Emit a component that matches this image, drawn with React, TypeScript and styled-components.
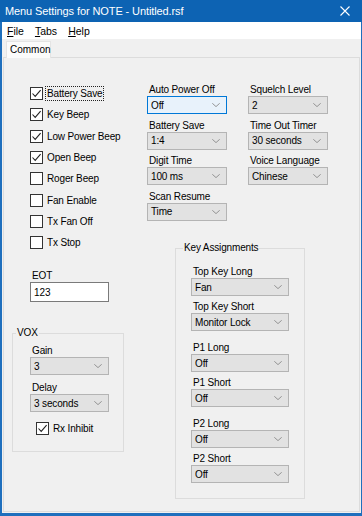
import styled, { createGlobalStyle } from "styled-components";

const GlobalStyle = createGlobalStyle`
  html, body {
    margin: 0;
    padding: 0;
    background: #ffffff;
  }
  body {
    font-family: "Liberation Sans", Arial, sans-serif;
    font-size: 10px;
    color: #000;
  }
`;

const Window = styled.div`
  width: 362px;
  height: 516px;
  box-sizing: border-box;
  border-left: 2px solid #1f6fbd;
  border-right: 1px solid #1f6fbd;
  border-bottom: 3px solid #1f6fbd;
  background: #f0f0f0;
  display: flex;
  flex-direction: column;
`;

const TitleBar = styled.div`
  height: 22px;
  margin: 0 -1px 0 -2px;
  background: #0d63b3;
  color: #fff;
  display: flex;
  align-items: center;
  justify-content: space-between;
  padding: 0 12px 0 5px;
  font-size: 11px;
  letter-spacing: -0.1px;
`;

const CloseIcon = styled.svg`
  width: 10px;
  height: 10px;
`;

const MenuBar = styled.div`
  height: 17px;
  background: #fff;
  display: flex;
  align-items: center;
  padding-left: 5px;
  gap: 11px;
  font-size: 10.5px;
`;

const MenuItem = styled.span`
  & > u {
    text-decoration: underline;
  }
`;

const TabStrip = styled.div`
  height: 19px;
  display: flex;
  align-items: flex-end;
  padding-left: 4px;
`;

const Tab = styled.div`
  height: 17px;
  width: 45px;
  box-sizing: border-box;
  background: #fbfbfb;
  border: 1px solid #e4e4e4;
  border-bottom: none;
  padding: 2px 0 0 3px;
  font-size: 10px;
  position: relative;
  z-index: 1;
`;

const Panel = styled.div`
  flex: 1;
  margin: -1px 1px 1px 1px;
  border: 1px solid #dcdcdc;
  display: flex;
  padding-top: 25px;
`;

const LeftCol = styled.div`
  width: 143px;
  display: flex;
  flex-direction: column;
`;

const CheckList = styled.div`
  padding-left: 26px;
  display: flex;
  flex-direction: column;
`;

const CheckRow = styled.div<{ $h?: number }>`
  height: ${(p) => p.$h ?? 21.3}px;
  display: flex;
  align-items: center;
  gap: 2px;
`;

const Box = styled.div`
  width: 13px;
  height: 13px;
  box-sizing: border-box;
  border: 1px solid #333;
  background: #fff;
  display: flex;
  align-items: center;
  justify-content: center;
`;

const CheckLabel = styled.span<{ $focus?: boolean }>`
  padding: 1px 1px;
  border: 1px dotted ${(p) => (p.$focus ? "#222" : "transparent")};
  letter-spacing: -0.15px;
`;

const FieldLabel = styled.div`
  line-height: 12px;
  height: 12px;
  padding-left: 2px;
  letter-spacing: -0.15px;
`;

const Field = styled.div<{ $gap?: number }>`
  display: flex;
  flex-direction: column;
  margin-bottom: ${(p) => p.$gap ?? 5.5}px;
`;

const TextBox = styled.div`
  width: 79px;
  height: 20px;
  box-sizing: border-box;
  border: 1px solid #7a7a7a;
  background: #fff;
  display: flex;
  align-items: center;
  padding-left: 3px;
`;

const Select = styled.div<{ $w: number; $focus?: boolean }>`
  width: ${(p) => p.$w}px;
  height: 18px;
  box-sizing: border-box;
  border: 1px solid ${(p) => (p.$focus ? "#0078d7" : "#b4b4b4")};
  background: ${(p) => (p.$focus ? "#e8f2fb" : "#e2e2e2")};
  display: flex;
  align-items: center;
  justify-content: space-between;
  padding: 0 6px 0 3px;
  letter-spacing: -0.15px;
`;

const Chevron = styled.svg`
  width: 8px;
  height: 4px;
`;

const EotBlock = styled.div`
  padding-left: 26px;
  margin-top: 17px;
`;

const Group = styled.fieldset<{ $w: number; $h: number }>`
  margin: 0;
  width: ${(p) => p.$w}px;
  height: ${(p) => p.$h}px;
  box-sizing: border-box;
  border: 1px solid #dcdcdc;
  padding: 0;
  display: flex;
  flex-direction: column;
`;

const Legend = styled.legend<{ $shift: number }>`
  margin-left: ${(p) => p.$shift}px;
  padding: 0 1px;
  line-height: 12px;
  letter-spacing: -0.15px;
`;

const VoxGroup = styled(Group)`
  margin: 25px 0 0 8px;
  padding: 6px 0 0 17px;
`;

const RxRow = styled.div`
  margin: 9px 0 0 6px;
  display: flex;
  align-items: center;
  gap: 2px;
`;

const RightArea = styled.div`
  display: flex;
  flex-direction: column;
`;

const SelectGrid = styled.div`
  display: grid;
  grid-template-columns: 80px 80px;
  column-gap: 21px;
  margin-top: 1px;
`;

const KeyGroup = styled(Group)`
  margin: 16px 0 0 28px;
  padding: 12px 0 0 15px;
`;

const Check = () => (
  <svg width="11" height="11" viewBox="0 0 11 11">
    <path d="M1.5 5.5 L4.2 8.4 L9.6 2.2" fill="none" stroke="#222" strokeWidth="1.1" />
  </svg>
);

const Drop = ({ value, w, focus }: { value: string; w: number; focus?: boolean }) => (
  <Select $w={w} $focus={focus}>
    <span>{value}</span>
    <Chevron viewBox="0 0 8 4">
      <path d="M0.3 0.3 L4 3.6 L7.7 0.3" fill="none" stroke="#8a8a8a" strokeWidth="0.9" />
    </Chevron>
  </Select>
);

const checks = [
  { label: "Battery Save", on: true, focus: true },
  { label: "Key Beep", on: true },
  { label: "Low Power Beep", on: true },
  { label: "Open Beep", on: true },
  { label: "Roger Beep", on: false },
  { label: "Fan Enable", on: false },
  { label: "Tx Fan Off", on: false },
  { label: "Tx Stop", on: false },
];

const midFields = [
  { label: "Auto Power Off", value: "Off", focus: true },
  { label: "Squelch Level", value: "2" },
  { label: "Battery Save", value: "1:4" },
  { label: "Time Out Timer", value: "30 seconds" },
  { label: "Digit Time", value: "100 ms" },
  { label: "Voice Language", value: "Chinese" },
  { label: "Scan Resume", value: "Time" },
];

const keyFields = [
  { label: "Top Key Long", value: "Fan", gap: 5 },
  { label: "Top Key Short", value: "Monitor Lock", gap: 11 },
  { label: "P1 Long", value: "Off", gap: 5 },
  { label: "P1 Short", value: "Off", gap: 11 },
  { label: "P2 Long", value: "Off", gap: 5 },
  { label: "P2 Short", value: "Off", gap: 0 },
];

export default function App() {
  return (
    <>
      <GlobalStyle />
      <Window>
        <TitleBar>
          <span>Menu Settings for NOTE - Untitled.rsf</span>
          <CloseIcon viewBox="0 0 10 10">
            <path d="M0.5 0.5 L9.5 9.5 M9.5 0.5 L0.5 9.5" stroke="#fff" strokeWidth="1.1" />
          </CloseIcon>
        </TitleBar>
        <MenuBar>
          <MenuItem>
            <u>F</u>ile
          </MenuItem>
          <MenuItem>
            <u>T</u>abs
          </MenuItem>
          <MenuItem>
            <u>H</u>elp
          </MenuItem>
        </MenuBar>
        <TabStrip>
          <Tab>Common</Tab>
        </TabStrip>
        <Panel>
          <LeftCol>
            <CheckList>
              {checks.map((c) => (
                <CheckRow key={c.label}>
                  <Box>{c.on && <Check />}</Box>
                  <CheckLabel $focus={c.focus}>{c.label}</CheckLabel>
                </CheckRow>
              ))}
            </CheckList>
            <EotBlock>
              <Field $gap={0}>
                <FieldLabel>EOT</FieldLabel>
                <TextBox>123</TextBox>
              </Field>
            </EotBlock>
            <VoxGroup $w={112} $h={125}>
              <Legend $shift={-14}>VOX</Legend>
              <Field $gap={7}>
                <FieldLabel>Gain</FieldLabel>
                <Drop value="3" w={79} />
              </Field>
              <Field $gap={0}>
                <FieldLabel>Delay</FieldLabel>
                <Drop value="3 seconds" w={79} />
              </Field>
              <RxRow>
                <Box>
                  <Check />
                </Box>
                <CheckLabel>Rx Inhibit</CheckLabel>
              </RxRow>
            </VoxGroup>
          </LeftCol>
          <RightArea>
            <SelectGrid>
              {midFields.map((f) => (
                <Field key={f.label + f.value}>
                  <FieldLabel>{f.label}</FieldLabel>
                  <Drop value={f.value} w={80} focus={f.focus} />
                </Field>
              ))}
            </SelectGrid>
            <KeyGroup $w={130} $h={257}>
              <Legend $shift={-8}>Key Assignments</Legend>
              {keyFields.map((f) => (
                <Field key={f.label} $gap={f.gap}>
                  <FieldLabel>{f.label}</FieldLabel>
                  <Drop value={f.value} w={98} />
                </Field>
              ))}
            </KeyGroup>
          </RightArea>
        </Panel>
      </Window>
    </>
  );
}
